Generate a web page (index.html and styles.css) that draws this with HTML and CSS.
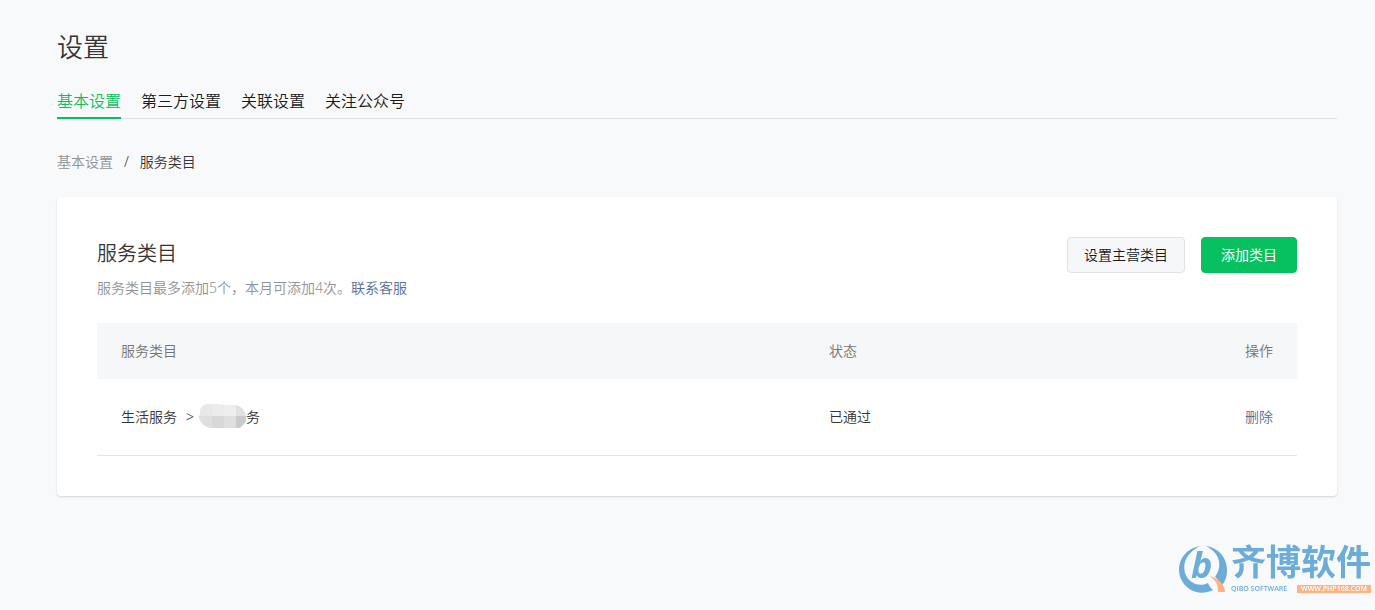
FILE: index.html
```html
<!DOCTYPE html>
<html lang="zh-CN">
<head>
<meta charset="utf-8">
<meta name="viewport" content="width=device-width, initial-scale=1">
<title>设置</title>
<link rel="stylesheet" href="styles.css">
</head>
<body>
<main class="page">
  <h1 class="page-title">设置</h1>
  <nav class="tabs">
    <a class="tab tab-active" href="#basic">基本设置</a>
    <a class="tab" href="#third">第三方设置</a>
    <a class="tab" href="#relation">关联设置</a>
    <a class="tab" href="#follow">关注公众号</a>
  </nav>
  <nav class="crumbs">
    <a class="crumb-link" href="#basic">基本设置</a>
    <span>/</span>
    <span>服务类目</span>
  </nav>
  <section class="card">
    <header class="card-head">
      <div>
        <h2 class="card-title">服务类目</h2>
        <p class="card-desc">服务类目最多添加5个，本月可添加4次。<a class="link" href="#support">联系客服</a></p>
      </div>
      <div class="actions">
        <button class="btn" type="button">设置主营类目</button>
        <button class="btn btn-primary" type="button">添加类目</button>
      </div>
    </header>
    <table class="table">
      <thead>
        <tr><th class="col-name">服务类目</th><th>状态</th><th class="col-op">操作</th></tr>
      </thead>
      <tbody>
        <tr>
          <td>
            <div class="category">
              <span>生活服务</span>
              <span class="arrow">&gt;</span>
              <svg class="mosaic" width="48" height="24" viewBox="0 0 48 24" aria-hidden="true">
                <defs><clipPath id="blob"><path d="M10 0H20Q25 2 37 1Q44 2 47 9Q50 17 46 20L42 24H13Q4 23 1 14L0 12L2 11V6Q4 0 10 0Z"/></clipPath></defs>
                <g clip-path="url(#blob)">
                  <path fill="#e8e8e8" d="M0 0h48v12H0z"/>
                  <path fill="#ececec" d="M14 0h12v12H14z"/>
                  <path fill="#eeeeee" d="M26 0h12v12H26z"/>
                  <path fill="#e0e0e0" d="M38 0h10v12H38z"/>
                  <path fill="#dfdfdf" d="M0 12h14v12H0z"/>
                  <path fill="#d8d8d8" d="M14 12h12v12H14z"/>
                  <path fill="#dfdfdf" d="M26 12h12v12H26z"/>
                  <path fill="#cacaca" d="M38 12h10v12H38z"/>
                </g>
              </svg>
              <span>务</span>
            </div>
          </td>
          <td>已通过</td>
          <td class="col-op"><a class="link" href="#delete">删除</a></td>
        </tr>
      </tbody>
    </table>
  </section>
</main>
<aside class="brand">
  <svg class="brand-mark" width="48" height="48" viewBox="0 0 48 48" aria-hidden="true">
    <path fill="#6bacd8" d="M21 0C4 3-4 19 2 33C8 46 22 50 34 44C31 42 30 39 29 37C19 42 9 36 6 27C3 16 9 6 21 0Z"/>
    <path fill="#6bacd8" d="M27 0C40 2 48 12 48 24C48 31 46 36 43 39C41 36 39 33 36 31C44 20 41 7 27 0Z"/>
    <path fill="#fcb283" d="M30 30C39 32 46 38 46 46H39C39 38 37 34 30 30Z"/>
    <text class="brand-letter" x="12" y="32">b</text>
  </svg>
  <div class="brand-text">
    <div class="brand-name">齐博软件</div>
    <div class="brand-sub">
      <span class="brand-en">QIBO SOFTWARE</span>
      <span class="brand-url">WWW.PHP168.COM</span>
    </div>
  </div>
</aside>
</body>
</html>
```
FILE: styles.css
```css
* {
  box-sizing: border-box;
}

body {
  margin: 0;
  background: #f8f9fb;
  color: #353535;
  font: 350 14px/20px "Noto Sans", "Noto Sans CJK SC", sans-serif;
}

a {
  color: inherit;
  text-decoration: none;
}

h1, h2, p {
  margin: 0;
  font-weight: 350;
}

.page {
  padding: 27px 38px 40px 57px;
}

.page-title {
  font-size: 26px;
  line-height: 40px;
}

.tabs {
  display: flex;
  gap: 20px;
  margin-top: 20px;
  border-bottom: 1px solid #e0e1e3;
  color: #1a1b1c;
  font-size: 16px;
  line-height: 28px;
}

.tab {
  margin-bottom: -1px;
  padding-bottom: 2px;
  border-bottom: 2px solid transparent;
}

.tab-active {
  border-color: #07c160;
  color: #07c160;
}

.crumbs {
  display: flex;
  gap: 11px;
  margin-top: 33px;
}

.crumb-link {
  color: #929292;
}

.card {
  margin-top: 25px;
  padding: 40px;
  border-radius: 4px;
  background: #fff;
  box-shadow: 0 1px 2px rgba(0, 0, 0, 0.15);
}

.card-head {
  display: flex;
  justify-content: space-between;
}

.card-title {
  font-size: 20px;
  line-height: 34px;
}

.card-desc {
  margin-top: 7px;
  color: #929292;
}

.link {
  color: #576b95;
}

.actions {
  display: flex;
  align-items: flex-start;
  gap: 16px;
}

.btn {
  height: 36px;
  padding: 0 16px;
  border: 1px solid #e2e3e5;
  border-radius: 4px;
  background: #f6f7f9;
  color: #1a1b1c;
  font: inherit;
}

.btn-primary {
  min-width: 96px;
  border-color: #07c160;
  background: #07c160;
  color: #fff;
  font-weight: 400;
}

.table {
  width: 100%;
  margin-top: 25px;
  border-collapse: collapse;
}

.table th,
.table td {
  padding: 18px 24px;
  font-weight: 350;
  text-align: left;
}

.table th {
  background: #f6f7f9;
  color: #747474;
}

.table td {
  padding: 27px 24px;
  border-bottom: 1px solid #e4e5e7;
}

.table .col-name {
  width: 59%;
}

.table .col-op {
  text-align: right;
}

.category {
  display: flex;
  align-items: center;
}

.mosaic {
  margin: -2px 0 0;
}

.arrow {
  margin: 0 4px 0 9px;
}

.brand {
  position: fixed;
  right: 4px;
  bottom: 16px;
  display: flex;
  align-items: flex-end;
  gap: 4px;
  color: #6bacd8;
}

.brand-letter {
  fill: #6bacd8;
  font: italic 700 36px "Open Sans", sans-serif;
}

.brand-name {
  margin-bottom: 2px;
  font: 700 35px/44px "Noto Sans CJK SC", sans-serif;
}

.brand-sub {
  display: flex;
  justify-content: space-between;
  align-items: center;
  font: 600 7px/10px "Open Sans", sans-serif;
}

.brand-url {
  padding: 0 4px;
  border-radius: 1px;
  background: #fcb283;
  color: #fff;
  line-height: 8px;
}
```
